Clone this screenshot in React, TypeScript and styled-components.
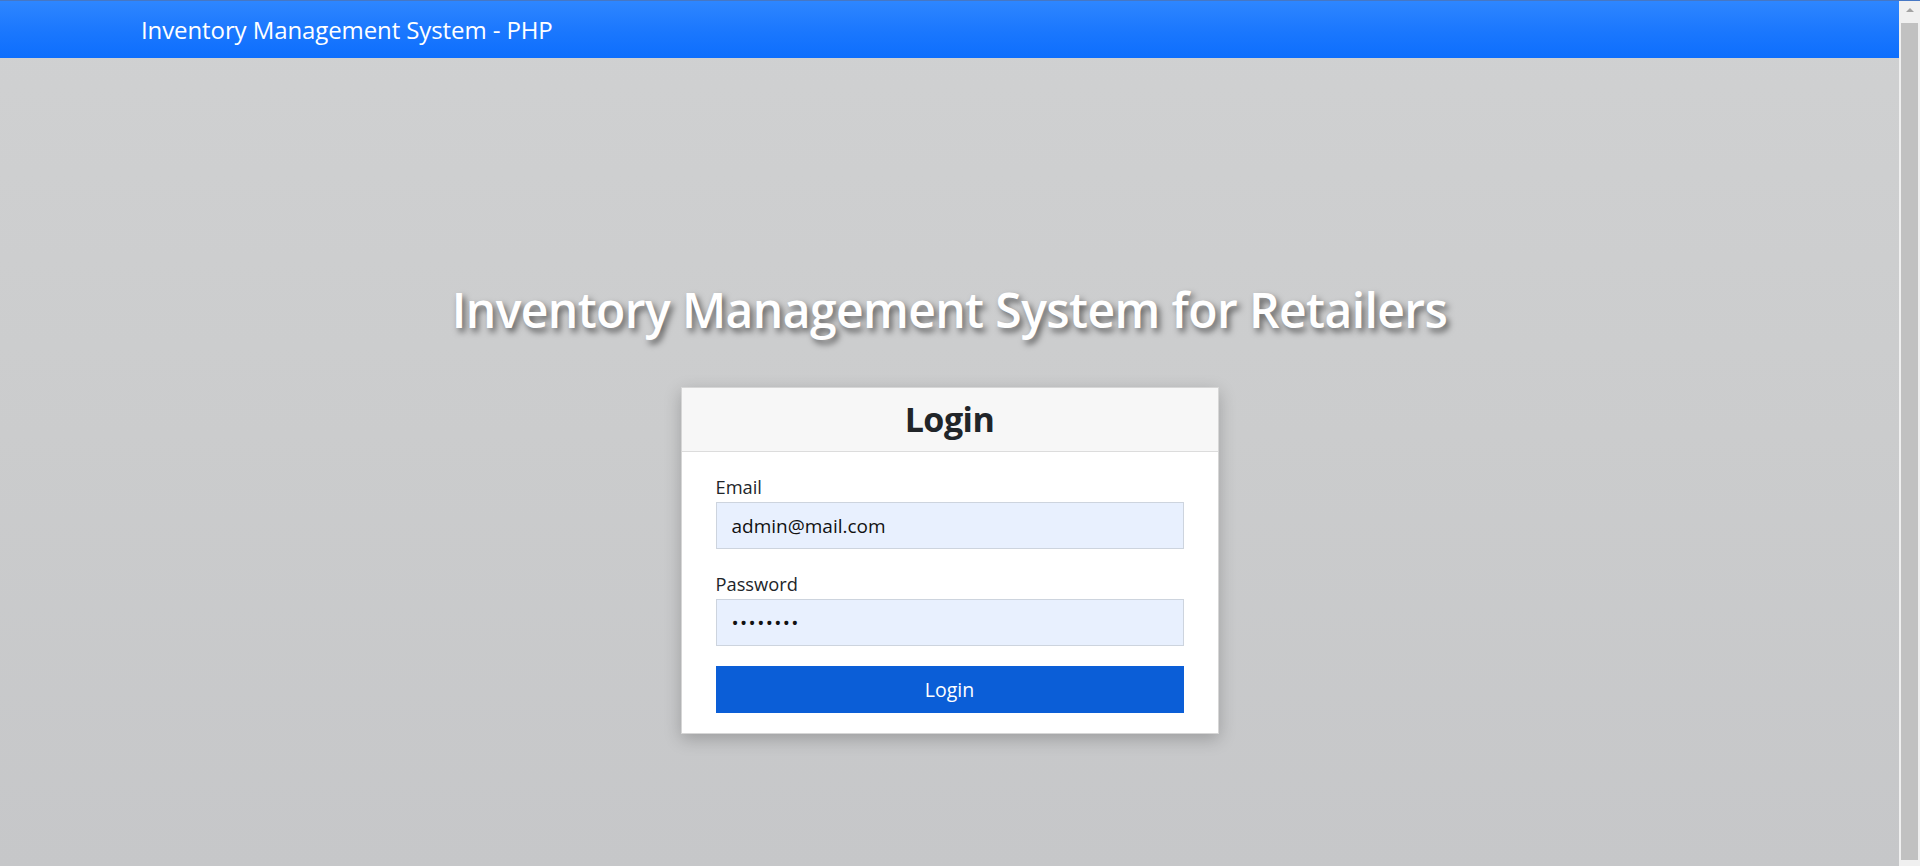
import React from "react";
import styled, { createGlobalStyle } from "styled-components";

const GlobalStyle = createGlobalStyle`
  html, body {
    margin: 0;
    padding: 0;
    overflow: hidden;
  }
  body {
    font-family: "Open Sans", "Noto Sans", "DejaVu Sans", sans-serif;
    color: #212529;
    background: #c8c9cb;
  }
  * {
    box-sizing: border-box;
  }
`;

const Window = styled.div`
  display: flex;
  height: 866px;
  width: 100%;
`;

const Page = styled.div`
  flex: 1;
  min-width: 0;
  display: flex;
  flex-direction: column;
  background: linear-gradient(180deg, #d0d1d2 0%, #cbcccd 50%, #c6c7c9 100%);
`;

const ScrollRail = styled.div`
  width: 21px;
  flex-shrink: 0;
  display: flex;
  flex-direction: column;
  background: #f0f0f0;
  border-top: 1px solid #4677c4;
`;

const ScrollArrow = styled.div`
  height: 20px;
  display: flex;
  align-items: center;
  justify-content: center;

  &::before {
    content: "";
    width: 0;
    height: 0;
    border-left: 4px solid transparent;
    border-right: 4px solid transparent;
    border-bottom: 4px solid #a3a3a3;
    margin-top: -3px;
  }
`;

const ScrollThumb = styled.div`
  flex: 1;
  margin: 2px 2px 6px;
  background: #c1c1c1;
`;

const Navbar = styled.nav`
  height: 58px;
  display: flex;
  align-items: center;
  padding-left: 141px;
  border-top: 1px solid #4677c4;
  background: linear-gradient(180deg, #2e86ff 0%, #1a77fe 55%, #0d6efd 100%);
`;

const Brand = styled.a`
  font-size: 24px;
  line-height: 30px;
  color: #ffffff;
  text-decoration: none;
  letter-spacing: -0.1px;
`;

const Main = styled.main`
  display: flex;
  flex-direction: column;
  align-items: center;
  padding-top: 222px;
`;

const HeroTitle = styled.h1`
  margin: 0;
  font-size: 48px;
  line-height: 60px;
  font-weight: 600;
  color: #ffffff;
  letter-spacing: -0.6px;
  text-shadow: 3px 4px 6px rgba(0, 0, 0, 0.55);
`;

const Card = styled.section`
  margin-top: 47px;
  width: 538px;
  background: #ffffff;
  border: 1px solid #d6d6d6;
  box-shadow: 0 5px 16px rgba(0, 0, 0, 0.22);
`;

const CardHeader = styled.header`
  padding: 8px 16px;
  background: #f7f7f7;
  border-bottom: 1px solid #dcdcdc;
  text-align: center;
`;

const CardTitle = styled.h2`
  margin: 0;
  font-size: 34px;
  line-height: 47px;
  font-weight: 700;
  color: #212529;
  letter-spacing: -0.5px;
`;

const Form = styled.form`
  display: flex;
  flex-direction: column;
  padding: 22px 34px 20px;
`;

const Field = styled.div<{ $gap: number }>`
  display: flex;
  flex-direction: column;
  margin-bottom: ${(p) => p.$gap}px;
`;

const Label = styled.label`
  font-size: 18.3px;
  line-height: 26px;
  margin-bottom: 2px;
  color: #212529;
`;

const Input = styled.input<{ $spacing?: number }>`
  height: 47px;
  width: 100%;
  padding: 0 15px;
  font-family: "Open Sans", "Noto Sans", sans-serif;
  font-size: 19px;
  letter-spacing: ${(p) => p.$spacing ?? 0}px;
  color: #111111;
  background: #e8f0fe;
  border: 1px solid #cdd4de;
  border-radius: 0;
  outline: none;
`;

const SubmitButton = styled.button`
  height: 47px;
  width: 100%;
  border: none;
  border-radius: 0;
  background: #0b5ed7;
  color: #ffffff;
  font-family: "Open Sans", "Noto Sans", sans-serif;
  font-size: 19.5px;
  cursor: pointer;
`;

export default function App() {
  return (
    <>
      <GlobalStyle />
      <Window>
        <Page>
          <Navbar>
            <Brand href="#">Inventory Management System - PHP</Brand>
          </Navbar>
          <Main>
            <HeroTitle>Inventory Management System for Retailers</HeroTitle>
            <Card>
              <CardHeader>
                <CardTitle>Login</CardTitle>
              </CardHeader>
              <Form onSubmit={(e) => e.preventDefault()}>
                <Field $gap={22}>
                  <Label htmlFor="email">Email</Label>
                  <Input id="email" type="email" defaultValue="admin@mail.com" />
                </Field>
                <Field $gap={20}>
                  <Label htmlFor="password">Password</Label>
                  <Input id="password" type="password" defaultValue="password" $spacing={1.4} />
                </Field>
                <SubmitButton type="submit">Login</SubmitButton>
              </Form>
            </Card>
          </Main>
        </Page>
        <ScrollRail aria-hidden="true">
          <ScrollArrow />
          <ScrollThumb />
        </ScrollRail>
      </Window>
    </>
  );
}
